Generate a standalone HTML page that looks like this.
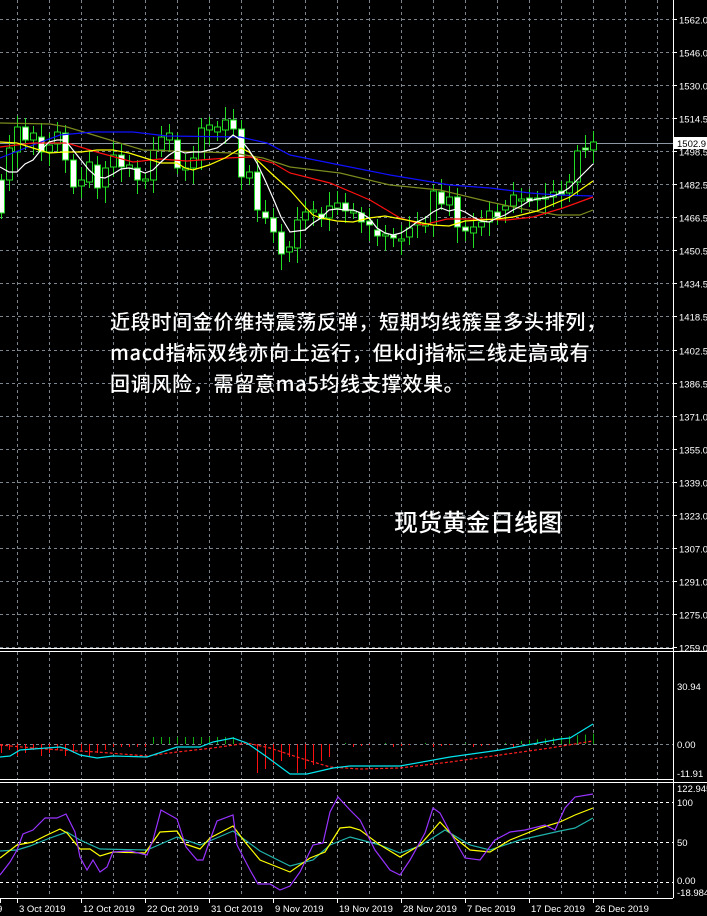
<!DOCTYPE html>
<html><head><meta charset="utf-8"><style>
html,body{margin:0;padding:0;background:#000;width:707px;height:916px;overflow:hidden}
svg{position:absolute;left:0;top:0}
.t{position:absolute;color:#fff;font-family:"Noto Sans CJK SC","Liberation Sans",sans-serif;white-space:nowrap;font-weight:500}
</style></head><body>
<svg id="s" width="707" height="916" xmlns="http://www.w3.org/2000/svg" font-family="Liberation Sans, sans-serif" font-size="9.5"></svg>
<div class="t" style="left:110px;top:305px;font-size:20px;line-height:31px;letter-spacing:0.7px">近段时间金价维持震荡反弹，短期均线簇呈多头排列，<br>macd指标双线亦向上运行，但kdj指标三线走高或有<br>回调风险，需留意ma5均线支撑效果。</div>
<div class="t" style="left:394px;top:503px;font-size:24px">现货黄金日线图</div>
<script>
var s=document.getElementById('s'),h='';
function L(x1,y1,x2,y2,c,d,w){h+='<line x1="'+x1+'" y1="'+y1+'" x2="'+x2+'" y2="'+y2+'" stroke="'+c+'" stroke-width="'+(w||1)+'"'+(d?' stroke-dasharray="'+d+'"':'')+'/>';}
function P(pts,c,d){h+='<polyline fill="none" stroke="'+c+'" stroke-width="1.2"'+(d?' stroke-dasharray="'+d+'"':'')+' points="'+pts+'"/>';}
function T(x,y,t,a){h+='<text x="'+x+'" y="'+y+'" fill="#fff"'+(a?' text-anchor="'+a+'"':'')+'>'+t+'</text>';}
var G='#7a8590';
for(var x=17;x<673;x+=32){L(x+.5,0,x+.5,648,G,'3,3');L(x+.5,652,x+.5,779,G,'3,3');L(x+.5,783,x+.5,897,G,'3,3');}
var labs=['1562.0','1546.0','1530.0','1514.5','1498.5','1482.5','1466.5','1450.5','1434.5','1418.5','1402.5','1386.5','1371.0','1355.0','1339.0','1323.0','1307.0','1291.0','1275.0','1259.0'];
for(var i=0;i<20;i++){var y=19+i*33.05;y=Math.round(y)+.5;L(0,y,673,y,G,'3,3');L(673,y,677,y,'#fff');T(679,y+4,labs[i]);}
L(0,143.5,673,143.5,'#8c98a4');
L(0,648.5,673,648.5,'#fff');L(0,651.5,707,651.5,'#fff');L(0,779.5,673,779.5,'#fff');L(0,782.5,707,782.5,'#fff');L(0,898.5,673,898.5,'#fff');
L(673.5,0,673.5,898,'#fff');
L(0,744.5,673,744.5,G,'3,3');
[802,842,882].forEach(function(y){L(0,y+.5,673,y+.5,'#fff','3,3');});
var c=[[1,180,213,1],[9,148,180,0],[17,127,152,0],[25,127,140,1],[33,133,140,0],[41,137,152,1],[49,145,152,0],[57,132,144,0],[65,133,160,1],[73,160,187,1],[81,180,186,0],[89,162,182,0],[97,165,188,1],[105,168,187,0],[113,155,167,0],[121,155,167,1],[129,165,168,0],[137,168,180,1],[145,179,181,0],[153,150,180,0],[161,137,150,0],[169,133,140,0],[177,140,168,1],[185,168,170,0],[193,158,168,0],[201,128,160,0],[209,125,130,0],[217,127,132,0],[225,120,130,0],[233,120,129,1],[241,129,177,1],[249,172,178,0],[257,172,210,1],[265,212,218,1],[273,218,232,1],[281,232,254,1],[289,247,252,0],[297,220,248,0],[305,212,220,0],[313,210,212,0],[321,214,219,1],[329,206,218,0],[337,203,208,0],[345,203,211,1],[353,211,213,0],[361,213,222,1],[369,221,225,1],[377,230,236,1],[385,234,236,0],[393,235,238,1],[401,239,241,0],[409,228,237,0],[417,222,225,0],[425,224,226,0],[433,191,225,0],[441,192,204,1],[449,197,205,0],[457,197,227,1],[465,227,231,1],[473,227,233,0],[481,222,227,0],[489,211,222,0],[497,212,217,1],[505,206,210,0],[513,195,206,0],[521,199,201,0],[529,198,201,1],[537,198,200,0],[545,197,199,0],[553,192,197,0],[561,191,194,1],[569,182,193,0],[577,151,182,0],[585,148,150,1],[593,142,150,0]];
c.forEach(function(k,i){var wt=k[1]-6-((i*7)%9),wb=k[2]+6+((i*5)%11);L(k[0]+.5,wt,k[0]+.5,wb,'#22dd22');
h+='<rect x="'+(k[0]-2.5)+'" y="'+k[1]+'" width="6" height="'+Math.max(1,k[2]-k[1])+'" fill="'+(k[3]?'#fff':'#000')+'" stroke="#22dd22" stroke-width="1"/>';});
P('0,123 50,124 67,127 87,133 110,140 143,150 233,153 263,158 290,167 340,173 390,185 440,190 490,202 523,209 557,215 580,215 593,210','#7b8a1e');
P('0,158 33,145 60,135 93,132 133,132 167,136 240,137 267,143 290,155 340,165 390,175 450,185 490,188 530,193 557,195 593,196','#1010ff');
P('0,147 33,143 67,143 100,153 133,162 160,159 187,161 227,158 250,157 273,163 290,173 330,183 370,200 400,218 423,225 447,219 477,219 507,220 533,217 563,208 593,197','#ff1010');
P('0,142 17,143 33,148 49,153 65,152 81,152 97,150 113,150 129,153 145,158 161,163 177,163 185,168 193,170 209,165 225,158 241,148 249,152 257,160 273,175 290,190 305,207 313,215 321,218 337,221 353,222 369,218 385,216 401,219 417,222 433,225 449,226 465,221 481,220 497,219 513,217 537,211 570,197 593,181','#ffff00');
P('0,167 9,172 17,172 25,164 33,160 41,150 49,142 57,140 65,140 73,150 81,160 89,170 97,177 105,178 113,174 121,169 129,168 137,170 145,173 153,170 161,162 169,155 177,150 185,153 193,152 201,152 209,150 217,148 225,142 233,135 241,140 249,150 257,163 265,180 273,198 281,217 290,232 305,230 313,223 321,218 329,210 337,209 345,210 353,210 361,213 369,218 377,228 385,233 393,235 401,233 409,228 417,222 425,218 433,212 441,208 449,211 457,209 465,212 473,217 481,221 489,222 497,218 505,215 513,210 521,206 529,201 537,199 545,198 553,196 561,193 569,188 577,180 585,172 593,164','#ffffff');
h+='<rect x="674" y="137" width="33" height="12" fill="#fff"/>';h+='<text x="677" y="147" fill="#000">1502.9</text>';
for(var x=1;x<600;x+=8){var v;if(x<110)v=6+((x*3)%9);else if(x<150)v=3;else if(x<240)v=-(2+((x*5)%8));else if(x<250)v=0;else if(x<330)v=10+((x*7)%20);else if(x<520)v=((x*3)%5)-1;else v=-(3+(x-520)/10);
if(v>0)L(x+.5,744,x+.5,744+v,'#ff1010');else if(v<0)L(x+.5,744+v,x+.5,744,'#11aa11');}
P('0,745 33,748 60,750 97,752 147,756 177,752 213,748 247,743 270,748 300,758 330,767 360,769 400,768 450,762 500,755 550,748 593,741','#ff2020','3,2');
P('0,757 10,756 20,750 33,749 60,747 67,749 80,755 97,758 113,756 147,757 177,747 200,747 213,742 233,738 247,743 267,757 290,774 307,774 333,768 350,766 400,766 450,757 500,750 560,739 570,738 593,724','#00e5ee');
T(677,690,'30.94');T(677,748,'0.00');T(677,777,'-11.91');
P('0,851 17,850 30,846 50,838 67,832 80,840 100,849 147,850 177,837 200,845 233,831 260,851 290,866 313,860 330,845 350,837 380,845 400,853 420,846 445,830 470,845 490,850 520,840 560,831 575,828 593,818','#20b2aa');
P('0,858 17,845 33,842 45,836 60,829 67,833 80,849 90,849 100,856 113,852 145,853 160,832 177,831 185,844 200,849 210,838 233,826 245,842 260,860 280,868 290,872 310,858 325,852 340,828 350,827 360,830 380,845 400,857 420,845 440,822 455,838 470,850 490,852 510,840 540,828 560,822 575,815 593,808','#ffff00');
P('0,875 10,862 17,850 23,834 33,830 45,818 57,818 66,814 75,832 80,857 87,870 93,860 100,872 107,867 113,852 130,851 147,855 153,840 161,810 177,819 186,847 197,860 203,860 210,840 217,821 233,815 237,845 250,870 258,884 270,884 280,890 290,886 300,872 313,845 323,843 330,812 338,797 350,810 360,820 375,850 390,870 400,875 410,860 425,833 433,808 440,813 450,832 465,858 480,860 495,840 510,832 525,830 545,825 555,830 565,808 575,797 593,794','#9933ff');
T(677,792,'122.945');T(677,806,'100');T(677,846,'50');T(677,884,'0.00');T(677,896,'-18.984');
var d=[[17,'3 Oct 2019'],[81,'12 Oct 2019'],[145,'22 Oct 2019'],[209,'31 Oct 2019'],[273,'9 Nov 2019'],[337,'19 Nov 2019'],[401,'28 Nov 2019'],[465,'7 Dec 2019'],[529,'17 Dec 2019'],[593,'26 Dec 2019']];
T(-3,912,'9');L(0.5,898,0.5,903,'#fff');
d.forEach(function(k){L(k[0]+.5,898,k[0]+.5,903,'#fff');T(k[0]+2,912,k[1]);});
s.innerHTML=h;
</script>
</body></html>
